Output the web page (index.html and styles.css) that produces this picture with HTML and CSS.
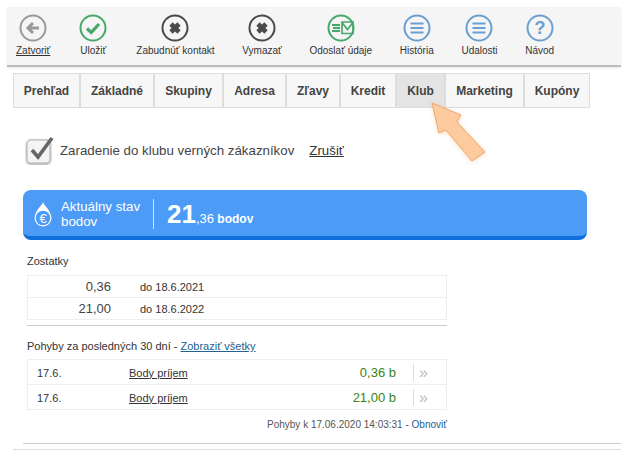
FILE: index.html
```html
<!DOCTYPE html>
<html lang="sk">
<head>
    <meta charset="UTF-8">
    <title>Klub</title>
    <link rel="stylesheet" href="styles.css">
</head>
<body>
    <div class="toolbar">
        <a class="tool tool-wide">
            <svg class="tool-icon" viewBox="0 0 28 28"><circle cx="14" cy="14" r="12.5" class="ring-grey"/><path d="M20 14H10M14 9l-5 5 5 5" class="glyph-grey"/></svg>
            <span class="tool-label active">Zatvoriť</span>
        </a>
        <a class="tool tool-wide">
            <svg class="tool-icon" viewBox="0 0 28 28"><circle cx="14" cy="14" r="12.5" class="ring-green"/><path d="M8 14.5l4.2 4L20 10" class="glyph-green"/></svg>
            <span class="tool-label">Uložiť</span>
        </a>
        <a class="tool">
            <svg class="tool-icon" viewBox="0 0 28 28"><circle cx="14" cy="14" r="12.5" class="ring-dark"/><path d="M10 10l8 8M18 10l-8 8" class="glyph-dark"/></svg>
            <span class="tool-label">Zabudnúť kontakt</span>
        </a>
        <a class="tool">
            <svg class="tool-icon" viewBox="0 0 28 28"><circle cx="14" cy="14" r="12.5" class="ring-dark"/><path d="M10 10l8 8M18 10l-8 8" class="glyph-dark"/></svg>
            <span class="tool-label">Vymazať</span>
        </a>
        <a class="tool">
            <svg class="tool-icon" viewBox="0 0 28 28"><circle cx="14" cy="14" r="12.5" class="ring-green"/><path d="M5 11h8M6 14h7M5 17h8" class="glyph-thin"/><path d="M15 8h11v11.5H15zM15 8.5l5.5 7 5.5-7" class="glyph-mail"/></svg>
            <span class="tool-label">Odoslať údaje</span>
        </a>
        <a class="tool">
            <svg class="tool-icon" viewBox="0 0 28 28"><circle cx="14" cy="14" r="12.5" class="ring-blue"/><path d="M7.5 9.5h13M7.5 14h13M7.5 18.5h13" class="glyph-blue"/></svg>
            <span class="tool-label">História</span>
        </a>
        <a class="tool">
            <svg class="tool-icon" viewBox="0 0 28 28"><circle cx="14" cy="14" r="12.5" class="ring-blue"/><path d="M7.5 9.5h13M7.5 14h13M7.5 18.5h13" class="glyph-blue"/></svg>
            <span class="tool-label">Udalosti</span>
        </a>
        <a class="tool">
            <svg class="tool-icon" viewBox="0 0 28 28"><circle cx="14" cy="14" r="12.5" class="ring-blue"/><text x="14" y="20" class="glyph-help">?</text></svg>
            <span class="tool-label">Návod</span>
        </a>
    </div>

    <div class="tabs">
        <a class="tab tab-prehlad">Prehľad</a>
        <a class="tab tab-zakladne">Základné</a>
        <a class="tab tab-skupiny">Skupiny</a>
        <a class="tab tab-adresa">Adresa</a>
        <a class="tab tab-zlavy">Zľavy</a>
        <a class="tab tab-kredit">Kredit</a>
        <a class="tab tab-klub selected">Klub</a>
        <a class="tab tab-marketing">Marketing</a>
        <a class="tab tab-kupony">Kupóny</a>
    </div>

    <!-- callout pointing at the Klub tab -->
    <svg class="callout" viewBox="0 0 56 62">
        <path d="M1 2L30 14 26 21 54 51 41 60 15 29 8 32Z"/>
    </svg>

    <div class="member">
        <svg class="member-check" viewBox="0 0 30 30">
            <rect x="2" y="5" width="23" height="23" rx="4" class="check-box"/>
            <path d="M7 15l6 7L27 3" class="check-mark"/>
        </svg>
        <span class="member-text">Zaradenie do klubu verných zákazníkov</span>
        <a class="member-cancel">Zrušiť</a>
    </div>

    <div class="status">
        <svg class="status-icon" viewBox="0 0 20 26">
            <path d="M10 1C9 5 2 9 1.5 17a8.5 8.5 0 0 0 17 0C18 9 11 5 10 1Z" class="drop"/>
            <circle cx="10" cy="17" r="7.3" class="drop-ring"/>
            <text x="10" y="21.5" class="drop-euro">€</text>
        </svg>
        <div class="status-title">Aktuálny stav<br>bodov</div>
        <div class="status-value"><b>21</b><span class="status-dec">,36</span> <span class="status-unit">bodov</span></div>
    </div>

    <div class="section">
        <div class="section-title">Zostatky</div>
        <table class="balance">
            <tr><td class="balance-num">0,36</td><td class="balance-date">do 18.6.2021</td></tr>
            <tr><td class="balance-num">21,00</td><td class="balance-date">do 18.6.2022</td></tr>
        </table>
        <div class="section-rule"></div>

        <div class="section-title moves-title">Pohyby za posledných 30 dní - <a class="link">Zobraziť všetky</a></div>
        <table class="moves">
            <tr>
                <td class="moves-date">17.6.</td>
                <td class="moves-name"><a>Body príjem</a></td>
                <td class="moves-amount">0,36 b</td>
                <td class="moves-more"><span>»</span></td>
            </tr>
            <tr>
                <td class="moves-date">17.6.</td>
                <td class="moves-name"><a>Body príjem</a></td>
                <td class="moves-amount">21,00 b</td>
                <td class="moves-more"><span>»</span></td>
            </tr>
        </table>
        <div class="moves-foot">Pohyby k 17.06.2020 14:03:31 - <a class="refresh">Obnoviť</a></div>
        <div class="section-rule foot-rule"></div>
    </div>
    <div class="page-rule"></div>
</body>
</html>
```

FILE: styles.css
```css
body {
    font-family: "Liberation Sans", Arial, sans-serif;
    background-color: white;
    color: #333;
    margin: 0;
    padding: 7px 10px 0 7px;
    position: relative;
    overflow: hidden;
}
a {
    color: inherit;
}
.toolbar {
    display: flex;
    height: 58px;
    padding-left: 9px;
    background-color: #f5f5f5;
    border-bottom: 2px solid #bdbdbd;
    box-shadow: 0 1px 2px rgba(0, 0, 0, 0.1);
}
.tool {
    display: flex;
    flex-direction: column;
    align-items: center;
    margin-right: 27.7px;
    padding-top: 7px;
}
.tool-wide {
    margin-right: 29px;
}
.tool-icon {
    width: 28px;
    height: 28px;
    fill: none;
}
.tool-label {
    margin-top: 2px;
    font-size: 10px;
    line-height: 13px;
    white-space: nowrap;
}
.tool-label.active {
    text-decoration: underline;
}
.ring-grey, .ring-green, .ring-dark, .ring-blue {
    stroke-width: 2;
}
.ring-grey { stroke: #999; }
.ring-green { stroke: #47a86b; }
.ring-dark { stroke: #4a4a4a; }
.ring-blue { stroke: #6a9fd0; }
.glyph-grey {
    fill: none;
    stroke: #999;
    stroke-width: 3;
}
.glyph-green {
    fill: none;
    stroke: #47a86b;
    stroke-width: 3.2;
}
.glyph-dark {
    fill: none;
    stroke: #4a4a4a;
    stroke-width: 4.6;
}
.glyph-blue {
    fill: none;
    stroke: #6a9fd0;
    stroke-width: 2.2;
}
.glyph-thin {
    fill: none;
    stroke: #47a86b;
    stroke-width: 1.8;
}
.glyph-mail {
    fill: none;
    stroke: #47a86b;
    stroke-width: 1.7;
}
.glyph-help {
    fill: #6a9fd0;
    font-size: 18px;
    font-weight: bold;
    text-anchor: middle;
}
.tabs {
    display: flex;
    margin: 6px 0 0 6px;
    height: 35px;
}
.tab {
    display: flex;
    align-items: center;
    justify-content: center;
    box-sizing: border-box;
    background-color: #f7f7f7;
    border: 1px solid #ddd;
    border-left: none;
    border-right: 2px solid #ddd;
    font-size: 12px;
    font-weight: bold;
    color: #444;
}
.tab-prehlad { width: 68px; border-left: 1px solid #ddd; }
.tab-zakladne { width: 74px; }
.tab-skupiny { width: 69px; }
.tab-adresa { width: 63px; }
.tab-zlavy { width: 54px; }
.tab-kredit { width: 56px; }
.tab-klub { width: 49px; }
.tab-marketing { width: 79px; }
.tab-kupony { width: 65px; border-right-width: 1px; }
.tab.selected {
    background-color: #e4e4e4;
}
.callout {
    position: absolute;
    left: 431px;
    top: 101px;
    width: 56px;
    height: 62px;
    fill: #fdcb9d;
    stroke: #eba873;
    stroke-width: 1;
    filter: drop-shadow(0 1px 2px rgba(240, 180, 120, 0.5));
}
.member {
    display: flex;
    align-items: center;
    margin: 25px 0 0 18px;
    height: 34px;
}
.member-check {
    width: 30px;
    height: 30px;
    margin-right: 5px;
    fill: none;
}
.check-box {
    fill: #f4f4f4;
    stroke: #c4c4c4;
    stroke-width: 1.5;
    filter: drop-shadow(0 1px 1px rgba(0, 0, 0, 0.4));
}
.check-mark {
    stroke: #666;
    stroke-width: 3.6;
}
.member-text {
    font-size: 13.3px;
    color: #444;
}
.member-cancel {
    margin-left: 15px;
    font-size: 13.3px;
    text-decoration: underline;
}
.status {
    display: flex;
    align-items: center;
    box-sizing: border-box;
    width: 564px;
    height: 50px;
    margin: 23px 0 0 16px;
    padding: 2px 0 0 10px;
    background-color: #4b9bf7;
    border-bottom: 4px solid #0f6fdc;
    border-radius: 8px;
    color: white;
}
.status-icon {
    width: 20px;
    height: 26px;
    margin-right: 8px;
}
.drop {
    fill: #fff;
}
.drop-ring {
    fill: #4b9bf7;
}
.drop-euro {
    fill: #fff;
    font-size: 13px;
    text-anchor: middle;
}
.status-title {
    width: 92px;
    height: 30px;
    font-size: 13.3px;
    line-height: 15px;
    border-right: 1px solid #cfe3fc;
}
.status-value {
    margin-left: 13px;
    font-weight: bold;
    font-size: 12px;
}
.status-value b {
    font-size: 26px;
}
.status-dec {
    font-weight: normal;
    font-size: 13px;
}
.section {
    margin: 14px 0 0 20px;
    width: 420px;
}
.section-title {
    font-size: 11px;
    line-height: 14px;
}
.balance, .moves {
    width: 100%;
    margin-top: 7px;
    border-collapse: collapse;
    border: 1px solid #eee;
    font-size: 11px;
}
.balance td, .moves td {
    border-top: 1px solid #eee;
    padding: 0;
}
.balance td {
    height: 21px;
}
.balance-num {
    width: 83px;
    text-align: right;
    font-size: 13px;
    color: #444;
}
.balance-date {
    padding-left: 29px !important;
}
.section-rule {
    height: 1px;
    margin-top: 5px;
    background-color: #ccc;
}
.moves-title {
    margin-top: 13px;
}
.link {
    color: #21618f;
    text-decoration: underline;
}
.moves {
    margin-top: 6px;
}
.moves td {
    height: 24px;
}
.moves td.moves-date {
    width: 92px;
    height: 23px;
    padding: 1px 0 0 9px;
}
.moves td.moves-name {
    height: 23px;
    padding-top: 1px;
}
.moves-name a {
    text-decoration: underline;
}
.moves-amount {
    text-align: right;
    padding-right: 17px !important;
    font-size: 13px;
    color: #3b8216;
}
.moves-more {
    width: 33px;
    color: #bbb;
    font-size: 16px;
}
.moves-more span {
    display: block;
    padding-left: 5px;
    border-left: 1px solid #ddd;
    line-height: 17px;
}
.moves-foot {
    margin-top: 8px;
    text-align: right;
    font-size: 10px;
    line-height: 13px;
    color: #555;
}
.refresh {
    color: #21618f;
}
.foot-rule {
    margin: 12px -174px 0 -4px;
}
.page-rule {
    width: 608px;
    height: 1px;
    margin: 5px 0 0 6px;
    background-color: #ddd;
}
```
